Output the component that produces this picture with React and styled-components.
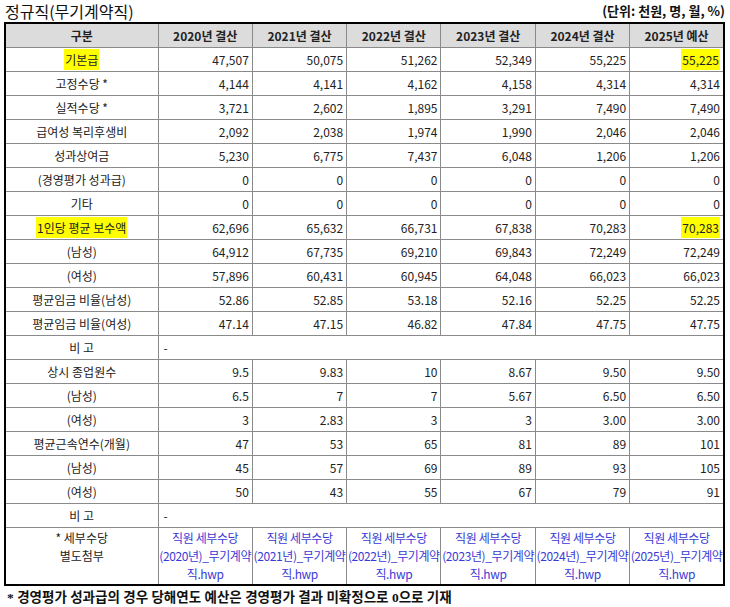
import styled, { createGlobalStyle } from 'styled-components';

const GlobalStyle = createGlobalStyle`
	body {
		margin: 0;
		background: #fff;
		font-family: 'Noto Sans CJK KR', 'Noto Sans', sans-serif;
		color: #222;
	}
`;

const Page = styled.div`
	padding: 0 5px 0 4px;
	width: 721px;
`;

const TitleRow = styled.div`
	display: flex;
	justify-content: space-between;
	align-items: center;
	height: 22px;
`;

const Title = styled.h2`
	margin: 0 0 0 1px;
	font-size: 16px;
	font-weight: 400;
	line-height: 20px;
	color: #111;
`;

const Unit = styled.div`
	font-size: 13px;
	font-weight: 700;
	line-height: 18px;
	color: #111;
`;

const Table = styled.table`
	width: 721px;
	border-collapse: collapse;
	table-layout: fixed;
	border: 2px solid #000;
	font-size: 12px;
`;

const HeadCell = styled.th`
	height: 23px;
	padding: 0;
	background: #dcdcdc;
	border: 1px solid #8a8a8a;
	font-weight: 700;
	color: #222;
	text-align: center;
`;

const LabelCell = styled.td`
	height: 23px;
	padding: 0 2px;
	border: 1px solid #8a8a8a;
	text-align: center;
	white-space: nowrap;
	vertical-align: ${(p) => (p.$tall ? 'top' : 'middle')};
	line-height: ${(p) => (p.$tall ? '18px' : 'normal')};
	padding-top: ${(p) => (p.$tall ? '1px' : '0')};
`;

const NumCell = styled.td`
	height: 23px;
	padding: 0 3px 0 2px;
	border: 1px solid #8a8a8a;
	text-align: right;
`;

const NoteCell = styled.td`
	height: 23px;
	padding: 0 5px;
	border: 1px solid #8a8a8a;
	text-align: left;
`;

const LinkCell = styled.td`
	padding: 1px 0;
	border: 1px solid #8a8a8a;
	text-align: center;
	line-height: 18px;
	white-space: nowrap;
	letter-spacing: -0.4px;
	color: #3a3ad6;
`;

const Mark = styled.span`
	background: #ffff00;
	padding: 2px 1px;
`;

const Footnote = styled.p`
	margin: 3px 0 0 3px;
	font-family: 'Liberation Serif', 'Noto Sans CJK KR', serif;
	font-size: 13.5px;
	font-weight: 700;
	line-height: 17px;
	color: #111;
`;

const years = ['2020년 결산', '2021년 결산', '2022년 결산', '2023년 결산', '2024년 결산', '2025년 예산'];

const rows = [
	{ label: '기본급', mark: true, values: ['47,507', '50,075', '51,262', '52,349', '55,225', '55,225'] },
	{ label: '고정수당 *', values: ['4,144', '4,141', '4,162', '4,158', '4,314', '4,314'] },
	{ label: '실적수당 *', values: ['3,721', '2,602', '1,895', '3,291', '7,490', '7,490'] },
	{ label: '급여성 복리후생비', values: ['2,092', '2,038', '1,974', '1,990', '2,046', '2,046'] },
	{ label: '성과상여금', values: ['5,230', '6,775', '7,437', '6,048', '1,206', '1,206'] },
	{ label: '(경영평가 성과급)', values: ['0', '0', '0', '0', '0', '0'] },
	{ label: '기타', values: ['0', '0', '0', '0', '0', '0'] },
	{ label: '1인당 평균 보수액', mark: true, values: ['62,696', '65,632', '66,731', '67,838', '70,283', '70,283'] },
	{ label: '(남성)', values: ['64,912', '67,735', '69,210', '69,843', '72,249', '72,249'] },
	{ label: '(여성)', values: ['57,896', '60,431', '60,945', '64,048', '66,023', '66,023'] },
	{ label: '평균임금 비율(남성)', values: ['52.86', '52.85', '53.18', '52.16', '52.25', '52.25'] },
	{ label: '평균임금 비율(여성)', values: ['47.14', '47.15', '46.82', '47.84', '47.75', '47.75'] },
	{ label: '비 고', note: '-' },
	{ label: '상시 종업원수', values: ['9.5', '9.83', '10', '8.67', '9.50', '9.50'] },
	{ label: '(남성)', values: ['6.5', '7', '7', '5.67', '6.50', '6.50'] },
	{ label: '(여성)', values: ['3', '2.83', '3', '3', '3.00', '3.00'] },
	{ label: '평균근속연수(개월)', values: ['47', '53', '65', '81', '89', '101'] },
	{ label: '(남성)', values: ['45', '57', '69', '89', '93', '105'] },
	{ label: '(여성)', values: ['50', '43', '55', '67', '79', '91'] },
	{ label: '비 고', note: '-' },
];

const linkYears = ['2020', '2021', '2022', '2023', '2024', '2025'];

export default function App() {
	return (
		<Page>
			<GlobalStyle />
			<TitleRow>
				<Title>정규직(무기계약직)</Title>
				<Unit>(단위: 천원, 명, 월, %)</Unit>
			</TitleRow>
			<Table>
				<colgroup>
					<col style={{ width: 153 }} />
					{years.map((y) => (
						<col key={y} />
					))}
				</colgroup>
				<thead>
					<tr>
						<HeadCell>구분</HeadCell>
						{years.map((y) => (
							<HeadCell key={y}>{y}</HeadCell>
						))}
					</tr>
				</thead>
				<tbody>
					{rows.map((r, i) => (
						<tr key={i}>
							<LabelCell>{r.mark ? <Mark>{r.label}</Mark> : r.label}</LabelCell>
							{r.note ? (
								<NoteCell colSpan={6}>{r.note}</NoteCell>
							) : (
								r.values.map((v, j) => (
									<NumCell key={j}>{r.mark && j === 5 ? <Mark>{v}</Mark> : v}</NumCell>
								))
							)}
						</tr>
					))}
					<tr>
						<LabelCell $tall>
							* 세부수당
							<br />
							별도첨부
						</LabelCell>
						{linkYears.map((y) => (
							<LinkCell key={y}>
								직원 세부수당
								<br />({y}년)_무기계약
								<br />
								직.hwp
							</LinkCell>
						))}
					</tr>
				</tbody>
			</Table>
			<Footnote>* 경영평가 성과급의 경우 당해연도 예산은 경영평가 결과 미확정으로 0으로 기재</Footnote>
		</Page>
	);
}
